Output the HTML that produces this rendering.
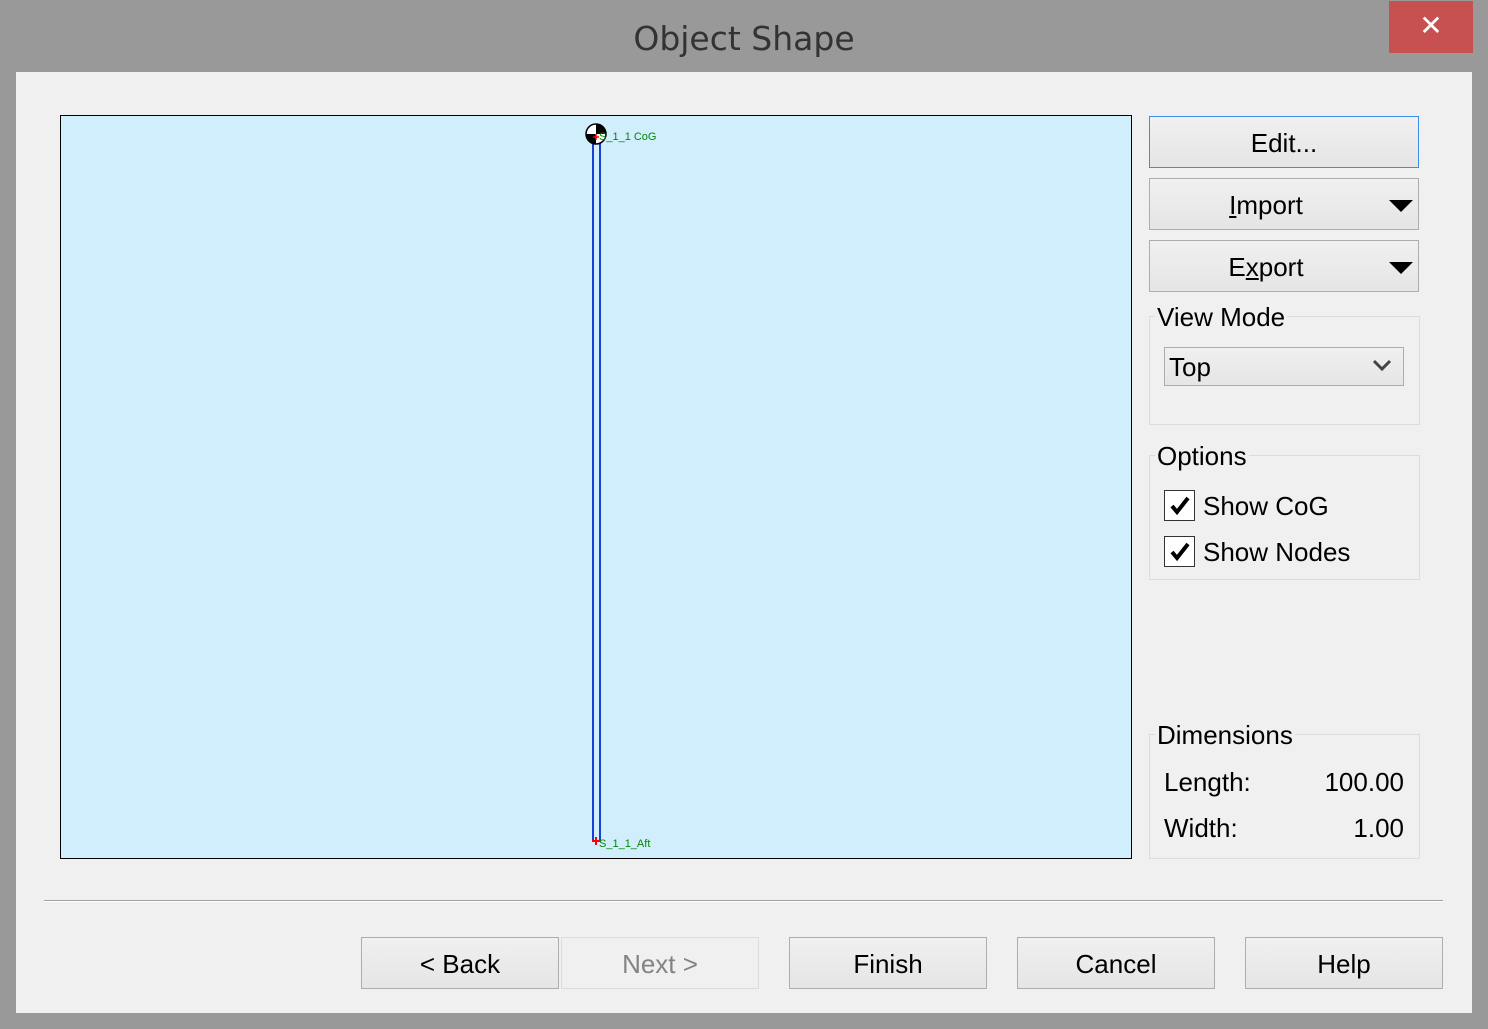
<!DOCTYPE html>
<html><head><meta charset="utf-8"><style>
*{margin:0;padding:0;box-sizing:border-box}
body{width:1488px;height:1029px;background:#999;font-family:"Liberation Sans",Arial,sans-serif;position:relative;overflow:hidden;color:#000}
.a{position:absolute}
.title{left:0;top:19px;width:1488px;text-align:center;font-size:33px;color:#333;font-family:"DejaVu Sans","Liberation Sans",sans-serif}
.close{left:1389px;top:1px;width:84px;height:52px;background:#c75050;color:#fff;font-size:28px;text-align:center;line-height:50px}
.client{left:16px;top:72px;width:1456px;height:941px;background:#f0f0f0}
.btn{position:absolute;border:1px solid #adadad;background:linear-gradient(#f0f0f0,#e5e5e5);font-size:26px;text-align:center}
.grp{position:absolute;border:1px solid #dcdcdc}
.lbl{position:absolute;font-size:26px;background:#f0f0f0;padding:0 2px}
.cb{position:absolute;width:31px;height:31px;border:1px solid #333;background:#fff}
.txt{position:absolute;font-size:26px}
.tri{position:absolute;width:0;height:0;border-left:12px solid transparent;border-right:12px solid transparent;border-top:12px solid #000}
</style></head><body>
<div class="a title">Object Shape</div>
<div class="a close">✕</div>
<div class="a client"></div>

<div class="a" style="left:60px;top:115px;width:1072px;height:744px;background:#d1eefd;border:1px solid #000"></div>
<div class="a" style="left:592px;top:140px;width:9px;height:702px;border:2px solid #1a3fd4;border-top:none"></div>
<svg class="a" style="left:584px;top:122px" width="24" height="24" viewBox="0 0 24 24">
<circle cx="12" cy="12" r="10" fill="#fff" stroke="#000" stroke-width="1.5"/>
<path d="M12 2A10 10 0 0 1 22 12H12Z" fill="#000"/><path d="M12 22A10 10 0 0 1 2 12H12Z" fill="#000"/>
<path d="M9 15h6M12 12v6" stroke="#f00" stroke-width="1.5"/></svg>
<div class="a" style="left:599px;top:131px;font-size:11px;color:#080">S_1_1 CoG</div>
<div class="a" style="left:592px;top:840px;width:8px;height:2px;background:#f00"></div>
<div class="a" style="left:595px;top:837px;width:2px;height:8px;background:#f00"></div>
<div class="a" style="left:599px;top:838px;font-size:11px;color:#080">S_1_1_Aft</div>

<div class="btn" style="left:1149px;top:116px;width:270px;height:52px;border-color:#3c8fe8;line-height:52px">Edit...</div>
<div class="btn" style="left:1149px;top:178px;width:270px;height:52px;line-height:52px;padding-right:36px"><u>I</u>mport</div>
<div class="tri" style="left:1389px;top:200px"></div>
<div class="btn" style="left:1149px;top:240px;width:270px;height:52px;line-height:52px;padding-right:36px">E<u>x</u>port</div>
<div class="tri" style="left:1389px;top:262px"></div>

<div class="grp" style="left:1149px;top:316px;width:271px;height:109px"></div>
<div class="lbl" style="left:1155px;top:302px">View Mode</div>
<div class="a" style="left:1164px;top:347px;width:240px;height:39px;border:1px solid #acacac;background:linear-gradient(#f0f0f0,#e5e5e5)"></div>
<div class="txt" style="left:1169px;top:352px">Top</div>
<svg class="a" style="left:1372px;top:358px" width="20" height="14"><path d="M2 3l8 8 8-8" fill="none" stroke="#444" stroke-width="3"/></svg>

<div class="grp" style="left:1149px;top:455px;width:271px;height:125px"></div>
<div class="lbl" style="left:1155px;top:441px">Options</div>
<div class="cb" style="left:1164px;top:490px"></div>
<svg class="a" style="left:1168px;top:494px" width="24" height="24"><path d="M4 12l5 6L20 4" fill="none" stroke="#000" stroke-width="4"/></svg>
<div class="txt" style="left:1203px;top:491px">Show CoG</div>
<div class="cb" style="left:1164px;top:536px"></div>
<svg class="a" style="left:1168px;top:540px" width="24" height="24"><path d="M4 12l5 6L20 4" fill="none" stroke="#000" stroke-width="4"/></svg>
<div class="txt" style="left:1203px;top:537px">Show Nodes</div>

<div class="grp" style="left:1149px;top:734px;width:271px;height:125px"></div>
<div class="lbl" style="left:1155px;top:720px">Dimensions</div>
<div class="txt" style="left:1164px;top:767px">Length:</div>
<div class="txt" style="left:1300px;top:767px;width:104px;text-align:right">100.00</div>
<div class="txt" style="left:1164px;top:813px">Width:</div>
<div class="txt" style="left:1300px;top:813px;width:104px;text-align:right">1.00</div>

<div class="a" style="left:44px;top:900px;width:1399px;height:2px;border-top:1px solid #a0a0a0;border-bottom:1px solid #fff"></div>

<div class="btn" style="left:361px;top:937px;width:198px;height:52px;line-height:52px">&lt; Back</div>
<div class="btn" style="left:561px;top:937px;width:198px;height:52px;line-height:52px;color:#838383;border-color:#dcdcdc;background:#f0f0f0">Next &gt;</div>
<div class="btn" style="left:789px;top:937px;width:198px;height:52px;line-height:52px">Finish</div>
<div class="btn" style="left:1017px;top:937px;width:198px;height:52px;line-height:52px">Cancel</div>
<div class="btn" style="left:1245px;top:937px;width:198px;height:52px;line-height:52px">Help</div>
</body></html>
